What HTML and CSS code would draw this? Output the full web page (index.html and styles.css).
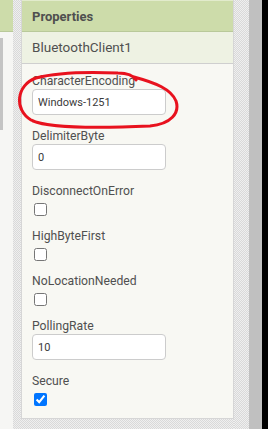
FILE: index.html
```html
<!DOCTYPE html>
<html lang="en">
  <head>
    <meta charset="UTF-8" />
    <meta name="viewport" content="width=device-width, initial-scale=1.0" />
    <title>Properties</title>
    <link rel="stylesheet" href="styles.css">
  </head>
  <body>
    <div class="page">
      <div class="left-pane">
        <div class="left-head"></div>
        <div class="left-body">
          <div class="left-scroll"></div>
        </div>
      </div>
      <div class="gutter"></div>

      <div class="panel-wrap">
        <div class="panel">
          <div class="panel-head">Properties</div>
          <div class="panel-sub">BluetoothClient1</div>

          <div class="panel-body">
            <div class="prop">
              <label>CharacterEncoding</label>
              <input type="text" class="text-box" value="Windows-1251" />
            </div>
            <div class="prop">
              <label>DelimiterByte</label>
              <input type="text" class="text-box" value="0" />
            </div>
            <div class="prop check">
              <label>DisconnectOnError</label>
              <input type="checkbox" />
            </div>
            <div class="prop check">
              <label>HighByteFirst</label>
              <input type="checkbox" />
            </div>
            <div class="prop check">
              <label>NoLocationNeeded</label>
              <input type="checkbox" />
            </div>
            <div class="prop">
              <label>PollingRate</label>
              <input type="text" class="text-box" value="10" />
            </div>
            <div class="prop check">
              <label>Secure</label>
              <input type="checkbox" checked />
            </div>
          </div>
        </div>
      </div>

      <div class="gutter wide"></div>
      <div class="scroll-track"></div>
      <div class="edge"></div>
    </div>

    <!-- hand drawn mark around the first property -->
    <svg class="scribble" width="268" height="429" viewBox="0 0 268 429">
      <path d="M136,80 C133,75 127,73 118,73 C94,72 58,72 36,78 C16,85 14,110 31,120 C48,129 105,128 150,126 C171,124 180,113 176,101 C171,89 156,83 134,77"
        fill="none" stroke="#e8121e" stroke-width="3" stroke-linecap="round" />
    </svg>
  </body>
</html>
```

FILE: styles.css
```css
body {
  margin: 0;
  padding: 0;
  font-family: Roboto, "Liberation Sans", Arial, sans-serif;
  background-color: #f5f5f5;
}

.page {
  display: flex;
  height: 429px;
  overflow: hidden;
}

.left-pane {
  width: 13px;
  display: flex;
  flex-direction: column;
}

.left-head {
  height: 31px;
  background-color: #cddcaa;
  border-bottom: 1px solid #b9c99a;
}

.left-body {
  flex: 1;
  background-color: #f6f6f4;
  padding-top: 6px;
}

.left-scroll {
  width: 3px;
  height: 92px;
  background-color: #c4c4c4;
}

.gutter {
  width: 8px;
  background-color: #e4e4e4;
  background-image: repeating-conic-gradient(#d9d9d9 0 25%, #efefef 0 50%);
  background-size: 2px 2px;
}

.gutter.wide {
  width: 15px;
}

.panel-wrap {
  width: 213px;
  background-color: #e4e4e4;
  background-image: repeating-conic-gradient(#d9d9d9 0 25%, #efefef 0 50%);
  background-size: 2px 2px;
  padding-bottom: 10px;
}

.panel {
  height: 419px;
  box-sizing: border-box;
  background-color: #f8f8f3;
  border-left: 1px solid #d6d6d6;
  border-right: 1px solid #d6d6d6;
  border-bottom: 1px solid #d6d6d6;
}

.panel-head {
  height: 32px;
  box-sizing: border-box;
  line-height: 31px;
  padding-left: 10px;
  background-color: #cddcaa;
  border-top: 1px solid #e2ebcc;
  border-bottom: 1px solid #b9c99a;
  font-size: 13px;
  font-weight: bold;
  color: #4f4f4f;
}

.panel-sub {
  height: 32px;
  box-sizing: border-box;
  line-height: 31px;
  padding-left: 10px;
  background-color: #eef2e3;
  border-bottom: 1px solid #cfcfcf;
  font-size: 13.5px;
  color: #505050;
}

.panel-body {
  padding: 9px 10px 0 10px;
}

.prop {
  margin-bottom: 13px;
}

.prop.check {
  margin-bottom: 12px;
}

.prop label {
  display: block;
  line-height: 16px;
  font-size: 12.2px;
  color: #505050;
}

.text-box {
  display: block;
  width: 134px;
  height: 26px;
  box-sizing: border-box;
  margin: 0;
  padding: 0 5px;
  border: 1px solid #cccccc;
  border-radius: 4px;
  background-color: #fff;
  font-family: Roboto, "Liberation Sans", Arial, sans-serif;
  font-size: 11px;
  color: #3a3a3a;
}

.prop.check input {
  display: block;
  width: 13px;
  height: 13px;
  margin: 4px 0 0 2px;
}

.scroll-track {
  width: 13px;
  background-color: #c0c0c0;
}

.edge {
  flex: 1;
  background-color: #000;
}

.scribble {
  position: absolute;
  left: 0;
  top: 0;
  pointer-events: none;
}
```
